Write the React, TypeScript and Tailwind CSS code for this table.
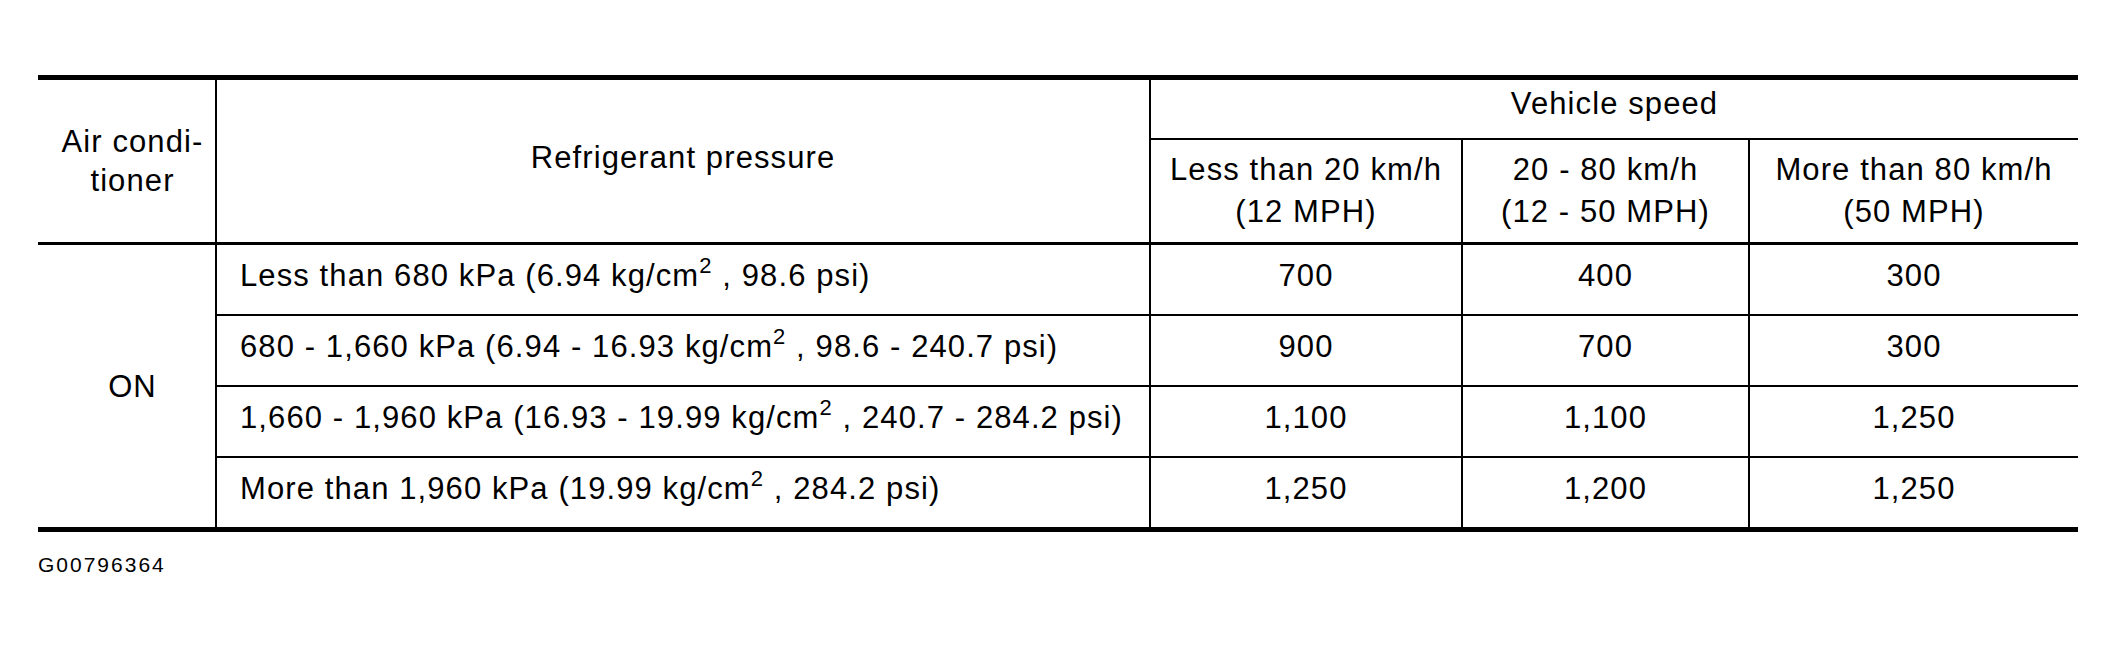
const rows = [
  { pre: "Less than 680 kPa (6.94 kg/cm", post: " , 98.6 psi)", v: ["700", "400", "300"] },
  { pre: "680 - 1,660 kPa (6.94 - 16.93 kg/cm", post: " , 98.6 - 240.7 psi)", v: ["900", "700", "300"] },
  { pre: "1,660 - 1,960 kPa (16.93 - 19.99 kg/cm", post: " , 240.7 - 284.2 psi)", v: ["1,100", "1,100", "1,250"] },
  { pre: "More than 1,960 kPa (19.99 kg/cm", post: " , 284.2 psi)", v: ["1,250", "1,200", "1,250"] },
];

const speeds = [
  ["Less than 20 km/h", "(12 MPH)"],
  ["20 - 80 km/h", "(12 - 50 MPH)"],
  ["More than 80 km/h", "(50 MPH)"],
];

export default function App() {
  return (
    <div className="min-h-screen bg-white text-black pt-[75px] pl-[38px] font-['Liberation_Sans',Arial,sans-serif]">
      <div className="w-[2040px] border-t-[5px] border-b-[5px] border-black">
        <div className="grid grid-cols-[179px_934px_312px_287px_328px] grid-rows-[60px_105px_71px_71px_71px_69px] text-[31px] tracking-[1.1px] leading-[39px]">
          {/* header */}
          <div className="row-span-2 flex items-center justify-center pl-3 text-center border-r-2 border-b-[3px] border-black">
            <span>Air condi-<br />tioner</span>
          </div>
          <div className="row-span-2 flex items-center justify-center pb-2 border-r-2 border-b-[3px] border-black">
            Refrigerant pressure
          </div>
          <div className="col-span-3 flex items-center justify-center pb-3 border-b-2 border-black">
            Vehicle speed
          </div>
          {speeds.map((s, i) => (
            <div
              key={i}
              className={
                "flex flex-col items-center justify-center leading-[42px] border-b-[3px] border-black " +
                (i < 2 ? "border-r-2" : "")
              }
            >
              <span>{s[0]}</span>
              <span>{s[1]}</span>
            </div>
          ))}

          {/* body */}
          <div className="row-span-4 flex items-center justify-center pl-3 border-r-2 border-black">ON</div>
          {rows.map((r, i) => {
            const last = i === rows.length - 1;
            return [
              <div
                key={"p" + i}
                className={"flex items-center pl-[23px] pb-2 border-r-2 border-black " + (last ? "" : "border-b-2")}
              >
                <span>
                  {r.pre}
                  <sup className="text-[22px] top-[-0.6em]">2</sup>
                  {r.post}
                </span>
              </div>,
              ...r.v.map((v, j) => (
                <div
                  key={"v" + i + j}
                  className={
                    "flex items-center justify-center pb-2 border-black " +
                    (j < 2 ? "border-r-2 " : "") +
                    (last ? "" : "border-b-2")
                  }
                >
                  {v}
                </div>
              )),
            ];
          })}
        </div>
      </div>
      <div className="mt-[22px] text-[21px] leading-[21px] tracking-[2px]">G00796364</div>
    </div>
  );
}
